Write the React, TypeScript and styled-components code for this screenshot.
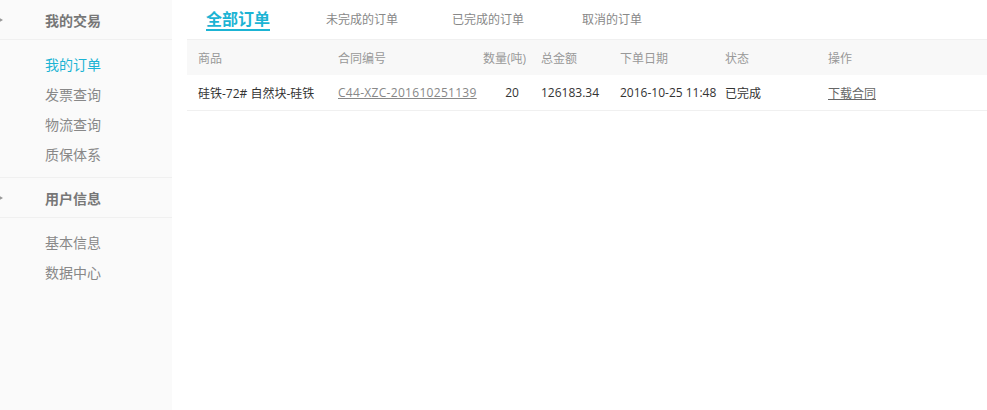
import React from "react";
import styled, { createGlobalStyle } from "styled-components";

const Global = createGlobalStyle`
  html, body { margin: 0; padding: 0; background: #fff; }
  body { font-family: "Open Sans", "Noto Sans CJK SC", sans-serif; font-size: 12px; color: #333; }
`;

const Page = styled.div`
  display: flex;
  min-height: 100vh;
  gap: 15px;
`;

const Sidebar = styled.aside`
  width: 172px;
  flex: none;
  background: #fafafa;
`;

const GroupHead = styled.div`
  display: flex;
  align-items: center;
  height: 40px;
  border-bottom: 1px solid #f0f0f0;
  font-size: 14px;
  font-weight: 700;
  color: #777;
  box-sizing: border-box;
`;

const Arrow = styled.span`
  width: 0;
  height: 0;
  border-top: 3px solid transparent;
  border-bottom: 3px solid transparent;
  border-left: 5px solid #999;
  margin-left: -2px;
  margin-right: 42px;
`;

const NavList = styled.ul<{ $last?: boolean }>`
  list-style: none;
  margin: 0;
  padding: 10px 0 ${(p) => (p.$last ? 0 : 7)}px;
  border-bottom: ${(p) => (p.$last ? "none" : "1px solid #f0f0f0")};
`;

const NavItem = styled.li<{ $active?: boolean }>`
  height: 30px;
  line-height: 30px;
  padding-left: 45px;
  font-size: 14px;
  color: ${(p) => (p.$active ? "#1cb4d4" : "#888")};
`;

const Main = styled.main`
  width: 800px;
  flex: none;
`;

const Tabs = styled.nav`
  display: flex;
  height: 39px;
  padding-left: 19px;
  box-sizing: border-box;
`;

const Tab = styled.div<{ $active?: boolean; $w: number }>`
  width: ${(p) => p.$w}px;
  padding-top: ${(p) => (p.$active ? 9 : 10)}px;
  box-sizing: border-box;
  span {
    display: inline-block;
    font-size: ${(p) => (p.$active ? 16 : 12)}px;
    font-weight: ${(p) => (p.$active ? 700 : 400)};
    color: ${(p) => (p.$active ? "#1cb4d4" : "#888")};
    line-height: 20px;
    border-bottom: ${(p) => (p.$active ? "2px solid #1cb4d4" : "none")};
  }
`;

const Table = styled.div`
  border-top: 1px solid #f0f0f0;
`;

const cols = "140px 145px 58px 79px 105px 103px 1fr";

const HeadRow = styled.div`
  display: grid;
  grid-template-columns: ${cols};
  height: 35px;
  align-items: center;
  padding-left: 11px;
  background: #f8f8f8;
  color: #999;
  font-size: 12px;
`;

const BodyRow = styled.div`
  display: grid;
  grid-template-columns: ${cols};
  height: 36px;
  align-items: center;
  padding-left: 11px;
  border-bottom: 1px solid #f0f0f0;
  color: #333;
  font-size: 12px;
  box-sizing: border-box;
`;

const Cell = styled.div<{ $center?: boolean }>`
  white-space: nowrap;
  text-align: ${(p) => (p.$center ? "center" : "left")};
`;

const Link = styled.a<{ $dark?: boolean }>`
  color: ${(p) => (p.$dark ? "#666" : "#888")};
  letter-spacing: ${(p) => (p.$dark ? 0 : 0.3)}px;
  text-decoration: underline;
  cursor: pointer;
`;

export default function App() {
  return (
    <>
      <Global />
      <Page>
        <Sidebar>
          <GroupHead>
            <Arrow />
            我的交易
          </GroupHead>
          <NavList>
            <NavItem $active>我的订单</NavItem>
            <NavItem>发票查询</NavItem>
            <NavItem>物流查询</NavItem>
            <NavItem>质保体系</NavItem>
          </NavList>
          <GroupHead>
            <Arrow />
            用户信息
          </GroupHead>
          <NavList $last>
            <NavItem>基本信息</NavItem>
            <NavItem>数据中心</NavItem>
          </NavList>
        </Sidebar>
        <Main>
          <Tabs>
            <Tab $active $w={120}>
              <span>全部订单</span>
            </Tab>
            <Tab $w={126}>
              <span>未完成的订单</span>
            </Tab>
            <Tab $w={130}>
              <span>已完成的订单</span>
            </Tab>
            <Tab $w={100}>
              <span>取消的订单</span>
            </Tab>
          </Tabs>
          <Table>
            <HeadRow>
              <Cell>商品</Cell>
              <Cell>合同编号</Cell>
              <Cell>数量(吨)</Cell>
              <Cell>总金额</Cell>
              <Cell>下单日期</Cell>
              <Cell>状态</Cell>
              <Cell>操作</Cell>
            </HeadRow>
            <BodyRow>
              <Cell>硅铁-72# 自然块-硅铁</Cell>
              <Cell>
                <Link>C44-XZC-201610251139</Link>
              </Cell>
              <Cell $center>20</Cell>
              <Cell>126183.34</Cell>
              <Cell>2016-10-25 11:48</Cell>
              <Cell>已完成</Cell>
              <Cell>
                <Link $dark>下载合同</Link>
              </Cell>
            </BodyRow>
          </Table>
        </Main>
      </Page>
    </>
  );
}
